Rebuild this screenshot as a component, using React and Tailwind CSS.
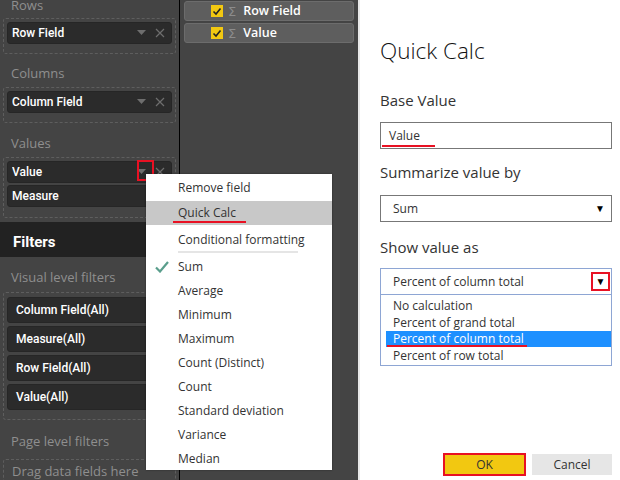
import React from "react";

const din = { fontFamily: '"Roboto", "Liberation Sans", sans-serif' };
const segoe = { fontFamily: '"Open Sans", "Noto Sans", sans-serif' };

function Pill({ label, x = true }) {
  return (
    <div className="flex items-center h-[22px] rounded-[3px] bg-[#2b2b2b] border border-[#262626] pl-[4px] pr-[6px] text-[12px] font-medium text-white" style={din}>
      <span className="flex-1 truncate">{label}</span>
      <svg width="9" height="6" viewBox="0 0 9 6" className="mr-[9px]"><path d="M0 0h9L4.5 5z" fill="#6e6e6e" /></svg>
      {x && (
        <svg width="10" height="10" viewBox="0 0 10 10"><path d="M1 1l8 8M9 1l-8 8" stroke="#6e6e6e" strokeWidth="1.2" /></svg>
      )}
    </div>
  );
}

function FilterPill({ label }) {
  return (
    <div className="flex items-center h-[26px] rounded-[3px] bg-[#2b2b2b] border border-[#262626] pl-[8px] text-[12px] font-medium text-white" style={din}>
      {label}
    </div>
  );
}

function Label({ children, className = "" }) {
  return <div className={`h-[20px] leading-[20px] text-[13px] text-[#8f8f8f] pl-[11px] ${className}`} style={segoe}>{children}</div>;
}

function Dashed({ children, className = "" }) {
  return <div className={`mx-[3px] border border-dashed border-[#5e5e5e] rounded-[3px] p-[3px] ${className}`}>{children}</div>;
}

function FieldRow({ label }) {
  return (
    <div className="flex items-center h-[20px] rounded-[3px] bg-[#5e5e5e] border border-[#6c6c6c]">
      <div className="ml-[26px] w-[12px] h-[12px] bg-[#f2c811] flex items-center justify-center">
        <svg width="10" height="9" viewBox="0 0 10 9"><path d="M1.5 4.5l2.5 2.5 4.5-5.5" stroke="#222" strokeWidth="1.6" fill="none" /></svg>
      </div>
      <span className="ml-[5px] text-[13px] text-[#8c8c8c] leading-none" style={{ fontFamily: '"DejaVu Sans", sans-serif' }}>Σ</span>
      <span className="ml-[7px] text-[12.5px] font-semibold text-white" style={segoe}>{label}</span>
    </div>
  );
}

const menuItems = ["Sum", "Average", "Minimum", "Maximum", "Count (Distinct)", "Count", "Standard deviation", "Variance", "Median"];

export default function App() {
  return (
    <div className="relative w-[620px] h-[480px] overflow-hidden flex bg-white">
      {/* Left panel */}
      <div className="w-[179px] h-full bg-[#444444] shrink-0">
        <Label className="-mt-[5px]">Rows</Label>
        <Dashed className="mt-[3px]">
          <Pill label="Row Field" />
          <div className="h-[6px]" />
        </Dashed>
        <Label className="mt-[9px]">Columns</Label>
        <Dashed className="mt-[4px]">
          <Pill label="Column Field" />
          <div className="h-[6px]" />
        </Dashed>
        <Label className="mt-[10px]">Values</Label>
        <Dashed className="mt-[4px] flex flex-col gap-[2px]">
          <Pill label="Value" />
          <Pill label="Measure" x={false} />
          <div className="h-[5px]" />
        </Dashed>
        <div className="mt-[4px] h-[35px] bg-[#222222] flex items-center pl-[13px] pt-[5px] text-[15px] font-bold text-white" style={din}>Filters</div>
        <Label className="mt-[10px]">Visual level filters</Label>
        <Dashed className="mt-[5px] flex flex-col gap-[3px] pt-[4px]">
          <FilterPill label="Column Field(All)" />
          <FilterPill label="Measure(All)" />
          <FilterPill label="Row Field(All)" />
          <FilterPill label="Value(All)" />
          <div className="h-[3px]" />
        </Dashed>
        <Label className="mt-[11px]">Page level filters</Label>
        <Dashed className="mt-[8px] h-[30px] pl-[8px] pt-[2px]">
          <div className="text-[13px] text-[#8f8f8f]" style={segoe}>Drag data fields here</div>
        </Dashed>
      </div>
      <div className="w-[1px] h-full bg-black shrink-0" />
      {/* Middle panel */}
      <div className="w-[178px] h-full bg-[#444444] flex flex-col gap-[2px] pl-[4px] pr-[4px] pt-[1px] shrink-0">
        <FieldRow label="Row Field" />
        <FieldRow label="Value" />
      </div>
      <div className="w-[2px] h-full bg-[#e8e8e8] shrink-0" />
      {/* Right panel */}
      <div className="flex-1 h-full bg-white pl-[20px] pr-[8px] text-[#222]" style={segoe}>
        <div className="mt-[36px] h-[30px] text-[22.5px] font-light leading-[30px] text-[#111]">Quick Calc</div>
        <div className="mt-[24px] h-[20px] text-[15px] leading-[20px] text-[#333]">Base Value</div>
        <div className="relative mt-[12px] h-[27px] border border-[#777] flex items-center pl-[8px] text-[12px] text-[#333]">
          Value
          <div className="absolute left-[1px] top-[22px] w-[53px] h-[2px] bg-[#e81123]" />
        </div>
        <div className="mt-[13px] h-[20px] text-[15px] leading-[20px] text-[#333]">Summarize value by</div>
        <div className="mt-[13px] h-[27px] border border-[#777] flex items-center pl-[12px] pr-[6px] text-[12px] text-[#333]">
          <span className="flex-1">Sum</span>
          <span className="text-[10px] text-black">▼</span>
        </div>
        <div className="mt-[15px] h-[20px] text-[15px] leading-[20px] text-[#333]">Show value as</div>
        <div className="mt-[11px] h-[27px] border border-[#8ea6d4] flex items-center pl-[12px] pr-[1px] text-[12px] text-[#333]">
          <span className="flex-1">Percent of column total</span>
          <span className="w-[19px] h-[19px] border-2 border-[#e81123] flex items-center justify-center text-[10px] text-black">▼</span>
        </div>
        <div className="h-[71px] border border-t-0 border-[#8ea6d4] pt-[2px] pl-[5px] text-[12px] text-[#333]">
          <div className="h-[17px] leading-[17px] pl-[7px]">No calculation</div>
          <div className="h-[17px] leading-[17px] pl-[7px]">Percent of grand total</div>
          <div className="relative h-[16px] leading-[16px] pl-[7px] bg-[#1e90ff] text-white">
            Percent of column total
            <div className="absolute left-[1px] top-[14px] w-[140px] h-[2px] bg-[#e81123]" />
          </div>
          <div className="h-[17px] leading-[17px] pl-[7px]">Percent of row total</div>
        </div>
        <div className="mt-[87px] flex justify-end gap-[6px]">
          <div className="w-[83px] h-[23px] bg-[#f2c811] border-2 border-[#e81123] flex items-center justify-center text-[12px] text-[#333]">OK</div>
          <div className="w-[80px] h-[21px] mt-[1px] bg-[#e6e6e6] flex items-center justify-center text-[12px] text-[#333]">Cancel</div>
        </div>
      </div>

      {/* Red highlight box on Value dropdown */}
      <div className="absolute left-[137px] top-[160px] w-[17px] h-[21px] border-2 border-[#e81123]" />

      {/* Context menu */}
      <div className="absolute left-[146px] top-[174px] w-[186px] h-[296px] bg-white shadow-[0_0_2px_rgba(0,0,0,0.4)] text-[12px] text-[#333]" style={segoe}>
        <div className="h-[27px] flex items-center pl-[32px]">Remove field</div>
        <div className="relative h-[24px] flex items-center pl-[32px] bg-[#c8c8c8]">
          Quick Calc
          <div className="absolute left-[27px] top-[20px] w-[73px] h-[2px] bg-[#e81123]" />
        </div>
        <div className="h-[26px] flex items-center pl-[32px] pt-[4px]">Conditional formatting</div>
        <div className="ml-[32px] mr-[34px] h-[2px] bg-[#e5e5e5]" />
        <div className="mt-[2px]">
          {menuItems.map((m, i) => (
            <div key={m} className="relative h-[24px] flex items-center pl-[32px]">
              {i === 0 && (
                <svg className="absolute left-[9px] top-[6px]" width="14" height="12" viewBox="0 0 14 12"><path d="M1 6.5l4 4L13 1" stroke="#5a9e8c" strokeWidth="2.2" fill="none" /></svg>
              )}
              {m}
            </div>
          ))}
        </div>
      </div>
    </div>
  );
}
